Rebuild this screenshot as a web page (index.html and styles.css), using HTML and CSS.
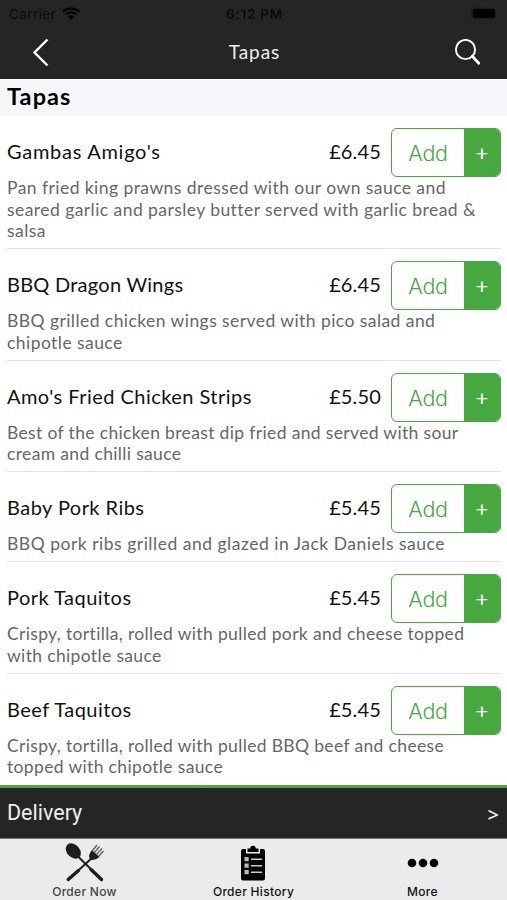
FILE: index.html
```html
<!DOCTYPE html>
<html lang="en">
<head>
<meta charset="utf-8">
<title>Tapas</title>
<link rel="stylesheet" href="styles.css">
</head>
<body>
<div class="app">
  <header class="header">
    <div class="status">
      <div class="carrier"><span>Carrier</span>
        <svg class="wifi" viewBox="0 0 18 13" width="18" height="13"><path d="M1 4.6a11.5 11.5 0 0 1 16 0M3.8 7.5a7.5 7.5 0 0 1 10.4 0" fill="none" stroke="#000" stroke-width="2.2"/><path d="M9 12.8 5.9 9.6a4.5 4.5 0 0 1 6.2 0z"/></svg>
      </div>
      <div class="time">6:12 PM</div>
      <div class="battery"><svg width="30" height="13" viewBox="0 0 30 13"><rect x="1" y=".5" width="25" height="12" rx="3.5" fill="#1e1e1c"/><rect x="3" y="2" width="22" height="9" rx="2" fill="#000"/><path d="M27.500 4.500q2 2 0 4z" fill="#1a1a1a"/></svg></div>
    </div>
    <div class="nav">
      <svg class="back" width="18" height="30" viewBox="0 0 18 30"><path d="M15.500 1.500 2.500 14.500l13 13" fill="none" stroke="#fff" stroke-width="2.400"/></svg>
      <h1 class="nav-title">Tapas</h1>
      <svg class="search" width="28" height="28" viewBox="0 0 28 28"><circle cx="11.500" cy="10.500" r="9.600" fill="none" stroke="#fff" stroke-width="1.900"/><path d="m18.300 17.300 6.500 7" stroke="#fff" stroke-width="2.800" stroke-linecap="round"/></svg>
    </div>
  </header>
  <h2 class="section">Tapas</h2>
  <main class="menu">
    <article class="item">
      <div class="row"><h3 class="name loose">Gambas Amigo's</h3><span class="price">£6.45</span><div class="add"><span class="label">Add</span><span class="plus">+</span></div></div>
      <p class="desc">Pan fried king prawns dressed with our own sauce and<br>seared garlic and parsley butter served with garlic bread &amp;<br>salsa</p>
    </article>
    <article class="item">
      <div class="row"><h3 class="name tight">BBQ Dragon Wings</h3><span class="price">£6.45</span><div class="add"><span class="label">Add</span><span class="plus">+</span></div></div>
      <p class="desc">BBQ grilled chicken wings served with pico salad and<br>chipotle sauce</p>
    </article>
    <article class="item">
      <div class="row"><h3 class="name">Amo's Fried Chicken Strips</h3><span class="price">£5.50</span><div class="add"><span class="label">Add</span><span class="plus">+</span></div></div>
      <p class="desc snug">Best of the chicken breast dip fried and served with sour<br>cream and chilli sauce</p>
    </article>
    <article class="item">
      <div class="row"><h3 class="name">Baby Pork Ribs</h3><span class="price">£5.45</span><div class="add"><span class="label">Add</span><span class="plus">+</span></div></div>
      <p class="desc wide">BBQ pork ribs grilled and glazed in Jack Daniels sauce</p>
    </article>
    <article class="item">
      <div class="row"><h3 class="name">Pork Taquitos</h3><span class="price">£5.45</span><div class="add"><span class="label">Add</span><span class="plus">+</span></div></div>
      <p class="desc snug">Crispy, tortilla, rolled with pulled pork and cheese topped<br>with chipotle sauce</p>
    </article>
    <article class="item">
      <div class="row"><h3 class="name">Beef Taquitos</h3><span class="price">£5.45</span><div class="add"><span class="label">Add</span><span class="plus">+</span></div></div>
      <p class="desc snug">Crispy, tortilla, rolled with pulled BBQ beef and cheese<br>topped with chipotle sauce</p>
    </article>
  </main>
  <div class="delivery"><span class="mode">Delivery</span><span class="chev">&gt;</span></div>
  <nav class="tabs">
    <div class="tab active">
      <svg width="40" height="39" viewBox="0 0 40 39"><g fill="#1d1d1d" stroke="#1d1d1d"><ellipse cx="8.300" cy="8" rx="6.400" ry="8.700" transform="rotate(-43 8.300 8)" stroke="none"/><path d="M12 12.500 36.500 36.500" stroke-width="2"/><path d="m26 26.500 10.500 10" stroke-width="3.400" stroke-linecap="round"/><path d="M28 14 3.500 36.500" stroke-width="2"/><path d="M13.500 27.500 3.200 36.500" stroke-width="3.400" stroke-linecap="round"/><path d="m27 7 7.500 7q-4.500 4-9.500 2.500-2.500-4.500 2-9.500z" stroke="none"/><path d="m27.500 7.500 4.500-5.500M29.500 9.500l5-6M31.500 11.500l5.500-6M33.500 13.500l5-5.500" stroke-width="1.500" stroke="#666"/></g></svg>
      <span>Order Now</span>
    </div>
    <div class="tab">
      <svg class="clip" width="26" height="36" viewBox="0 0 26 36"><path d="M3 4h3v4.500h14V4h3q2 0 2 2v27.500q0 2-2 2H3q-2 0-2-2V6q0-2 2-2z"/><path d="M7.500 7V3.500h2.700a2.800 2.800 0 0 1 5.600 0h2.700V7z"/><g fill="#bbb"><path d="M4.500 12h4.200v4.200H4.500zM4.500 18.500h4.200v4.200H4.500zM4.500 25h4.200v4.200H4.500z"/></g><path d="M11 14.200h11M11 20.700h11M11 27.200h11" stroke="#ccc" stroke-width="1.400"/></svg>
      <span>Order History</span>
    </div>
    <div class="tab">
      <svg width="32" height="10" viewBox="0 0 32 10"><circle cx="5" cy="5" r="4.300"/><circle cx="16" cy="5" r="4.300"/><circle cx="27" cy="5" r="4.300"/></svg>
      <span>More</span>
    </div>
  </nav>
</div>
</body>
</html>
```
FILE: styles.css
```css
* { box-sizing: border-box; margin: 0; padding: 0; }
body { background: #fff; font-family: Lato, "Liberation Sans", sans-serif; color: #111; }
svg { display: block; }
.app { width: 507px; height: 900px; display: flex; flex-direction: column; overflow: hidden; }
.header { height: 79px; background: #252523; flex: none; }
.status { height: 26px; display: grid; grid-template-columns: 1fr 1fr 1fr; align-items: center; padding: 1px 7px 0 9px; font: 13.500px/20px Inter, sans-serif; color: #0b0b0b; }
.carrier { display: flex; align-items: center; gap: 6px; letter-spacing: .4px; }
.time { text-align: center; font-weight: 600; letter-spacing: .8px; }
.battery { display: flex; justify-content: flex-end; }
.nav { height: 53px; display: grid; grid-template-columns: 100px 1fr 100px; align-items: center; }
.back { margin-left: 32px; }
.nav-title { text-align: center; font-size: 19px; line-height: 24px; padding: 0 0 2px 2px; font-weight: 400; color: #eee; letter-spacing: .9px; }
.search { margin-left: 47px; }
.section { flex: none; height: 37px; padding-left: 7px; background: #f5f6f9; border-top: 1px solid #fff; font-size: 23.500px; line-height: 33px; font-weight: 700; color: #000; letter-spacing: 1.100px; }
.menu { flex: none; height: 669px; }
.item { margin: 0 6px 0 7px; padding: 12px 0 6.500px; border-bottom: 1px solid #e2e2e2; }
.item:last-child { border-bottom-color: transparent; }
.row { display: flex; align-items: center; height: 49px; }
.name { flex: 1; font-size: 20px; line-height: 24px; padding-bottom: 3px; font-weight: 400; letter-spacing: .46px; }
.name.loose { letter-spacing: .72px; }
.name.tight { letter-spacing: .25px; }
.price { font-size: 20px; line-height: 24px; padding-bottom: 3px; margin-right: 10px; letter-spacing: .15px; }
.add { width: 110px; height: 49px; border: 1px solid #46a83f; border-radius: 6px; display: flex; overflow: hidden; }
.label { flex: 1; text-align: center; color: #46a83f; font-family: Inter, sans-serif; font-weight: 350; font-size: 21.500px; line-height: 48px; letter-spacing: -.3px; }
.plus { width: 36px; background: #46a83f; color: #fff; text-align: center; font-size: 22px; line-height: 48px; }
.desc { font-size: 17.500px; line-height: 21.500px; color: #666; letter-spacing: .44px; white-space: nowrap; }
.desc.snug { letter-spacing: .35px; }
.desc.wide { letter-spacing: .51px; }
.delivery { flex: none; height: 54px; background: #252523; border-top: 3px solid #58a14f; border-bottom: 1px solid #777; display: flex; align-items: center; justify-content: space-between; padding: 0 8px 0 7px; color: #eee; }
.mode { font-family: Roboto, sans-serif; font-size: 21.500px; line-height: 24px; padding-bottom: 1px; }
.chev { font-family: "Open Sans", sans-serif; font-size: 20px; padding-top: 2px; font-weight: 600; }
.tabs { flex: 1; display: grid; grid-template-columns: repeat(3, 1fr); background: #ebebeb; }
.tab { display: grid; grid-template-rows: 45px 14px; justify-items: center; align-items: center; padding-top: 1px; font: 500 12px/14px Inter, sans-serif; color: #111; letter-spacing: .3px; }
.clip { margin-right: 2px; }
.active { color: #444; }
```
